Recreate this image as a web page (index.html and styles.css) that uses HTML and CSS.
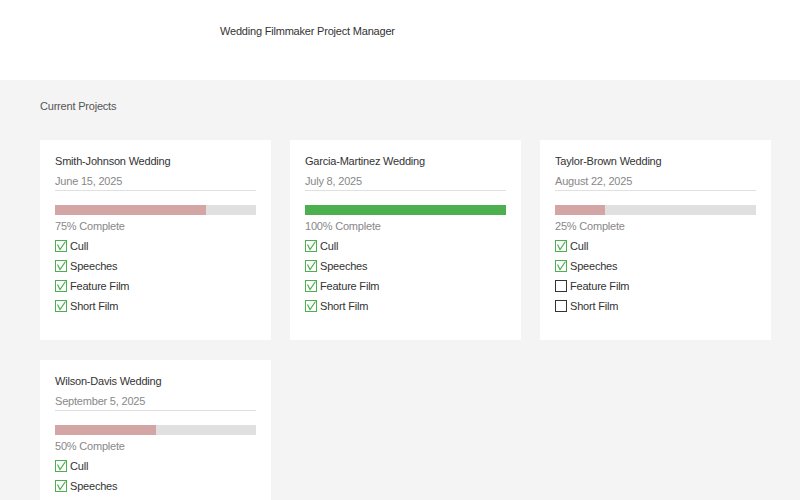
FILE: index.html
```html
<!DOCTYPE html>
<html lang="en">
<head>
<meta charset="utf-8">
<title>Wedding Filmmaker Project Manager</title>
<link rel="stylesheet" href="styles.css">
</head>
<body>
<header class="top">
  <h1 class="app-title">Wedding Filmmaker Project Manager</h1>
</header>
<main class="main">
  <h2 class="section-title">Current Projects</h2>
  <div class="grid">
    <section class="card">
      <h3 class="card-title">Smith-Johnson Wedding</h3>
      <div class="card-date">June 15, 2025</div>
      <div class="bar"><div class="fill" style="width:75%"></div></div>
      <div class="pct">75% Complete</div>
      <ul class="tasks">
        <li class="task"><span class="box on"><svg viewBox="0 0 10 10"><path d="M1.5 3.5 L4 8.5 L9.5 0.5"/></svg></span>Cull</li>
        <li class="task"><span class="box on"><svg viewBox="0 0 10 10"><path d="M1.5 3.5 L4 8.5 L9.5 0.5"/></svg></span>Speeches</li>
        <li class="task"><span class="box on"><svg viewBox="0 0 10 10"><path d="M1.5 3.5 L4 8.5 L9.5 0.5"/></svg></span>Feature Film</li>
        <li class="task"><span class="box on"><svg viewBox="0 0 10 10"><path d="M1.5 3.5 L4 8.5 L9.5 0.5"/></svg></span>Short Film</li>
      </ul>
    </section>
    <section class="card">
      <h3 class="card-title">Garcia-Martinez Wedding</h3>
      <div class="card-date">July 8, 2025</div>
      <div class="bar"><div class="fill done" style="width:100%"></div></div>
      <div class="pct">100% Complete</div>
      <ul class="tasks">
        <li class="task"><span class="box on"><svg viewBox="0 0 10 10"><path d="M1.5 3.5 L4 8.5 L9.5 0.5"/></svg></span>Cull</li>
        <li class="task"><span class="box on"><svg viewBox="0 0 10 10"><path d="M1.5 3.5 L4 8.5 L9.5 0.5"/></svg></span>Speeches</li>
        <li class="task"><span class="box on"><svg viewBox="0 0 10 10"><path d="M1.5 3.5 L4 8.5 L9.5 0.5"/></svg></span>Feature Film</li>
        <li class="task"><span class="box on"><svg viewBox="0 0 10 10"><path d="M1.5 3.5 L4 8.5 L9.5 0.5"/></svg></span>Short Film</li>
      </ul>
    </section>
    <section class="card">
      <h3 class="card-title">Taylor-Brown Wedding</h3>
      <div class="card-date">August 22, 2025</div>
      <div class="bar"><div class="fill" style="width:25%"></div></div>
      <div class="pct">25% Complete</div>
      <ul class="tasks">
        <li class="task"><span class="box on"><svg viewBox="0 0 10 10"><path d="M1.5 3.5 L4 8.5 L9.5 0.5"/></svg></span>Cull</li>
        <li class="task"><span class="box on"><svg viewBox="0 0 10 10"><path d="M1.5 3.5 L4 8.5 L9.5 0.5"/></svg></span>Speeches</li>
        <li class="task"><span class="box"></span>Feature Film</li>
        <li class="task"><span class="box"></span>Short Film</li>
      </ul>
    </section>
    <section class="card">
      <h3 class="card-title">Wilson-Davis Wedding</h3>
      <div class="card-date">September 5, 2025</div>
      <div class="bar"><div class="fill" style="width:50%"></div></div>
      <div class="pct">50% Complete</div>
      <ul class="tasks">
        <li class="task"><span class="box on"><svg viewBox="0 0 10 10"><path d="M1.5 3.5 L4 8.5 L9.5 0.5"/></svg></span>Cull</li>
        <li class="task"><span class="box on"><svg viewBox="0 0 10 10"><path d="M1.5 3.5 L4 8.5 L9.5 0.5"/></svg></span>Speeches</li>
        <li class="task"><span class="box"></span>Feature Film</li>
        <li class="task"><span class="box"></span>Short Film</li>
      </ul>
    </section>
  </div>
</main>
</body>
</html>
```

FILE: styles.css
```css
* { box-sizing: border-box; }
html, body { margin: 0; padding: 0; }
body {
  font-family: "Liberation Sans", Arial, sans-serif;
  font-size: 11px;
  letter-spacing: -0.2px;
  color: #444;
  background: #f4f4f4;
}
.top {
  background: #fff;
  height: 80px;
  padding: 25px 0 0 220px;
}
.app-title {
  margin: 0;
  font-size: 11px;
  font-weight: normal;
  line-height: 13px;
  color: #333;
}
.main {
  padding: 20px 40px 0 40px;
}
.section-title {
  margin: 0;
  font-size: 11px;
  font-weight: normal;
  line-height: 13px;
  color: #555;
}
.grid {
  margin-top: 27px;
  display: grid;
  grid-template-columns: repeat(3, 231px);
  gap: 20px 19px;
}
.card {
  background: #fff;
  height: 200px;
  padding: 15px;
}
.card-title {
  margin: 0;
  font-size: 11px;
  font-weight: normal;
  line-height: 13px;
  color: #333;
}
.card-date {
  margin-top: 7px;
  font-size: 11px;
  line-height: 13px;
  color: #888;
  padding-bottom: 2px;
  border-bottom: 1px solid #e0e0e0;
}
.bar {
  margin-top: 14px;
  height: 10px;
  background: #e0e0e0;
}
.fill {
  height: 100%;
  background: #d4a5a5;
}
.fill.done { background: #4caf50; }
.pct {
  margin-top: 5px;
  line-height: 13px;
  color: #888;
}
.tasks {
  list-style: none;
  margin: 3px 0 0 0;
  padding: 0;
}
.task {
  display: flex;
  align-items: center;
  height: 20px;
  color: #333;
}
.box {
  flex: none;
  width: 12px;
  height: 12px;
  border: 1px solid #333;
  margin-right: 3px;
  display: flex;
}
.box.on { border-color: #4caf50; }
.box svg {
  width: 10px;
  height: 10px;
  overflow: visible;
  fill: none;
  stroke: #4caf50;
  stroke-width: 1.2;
}
```
